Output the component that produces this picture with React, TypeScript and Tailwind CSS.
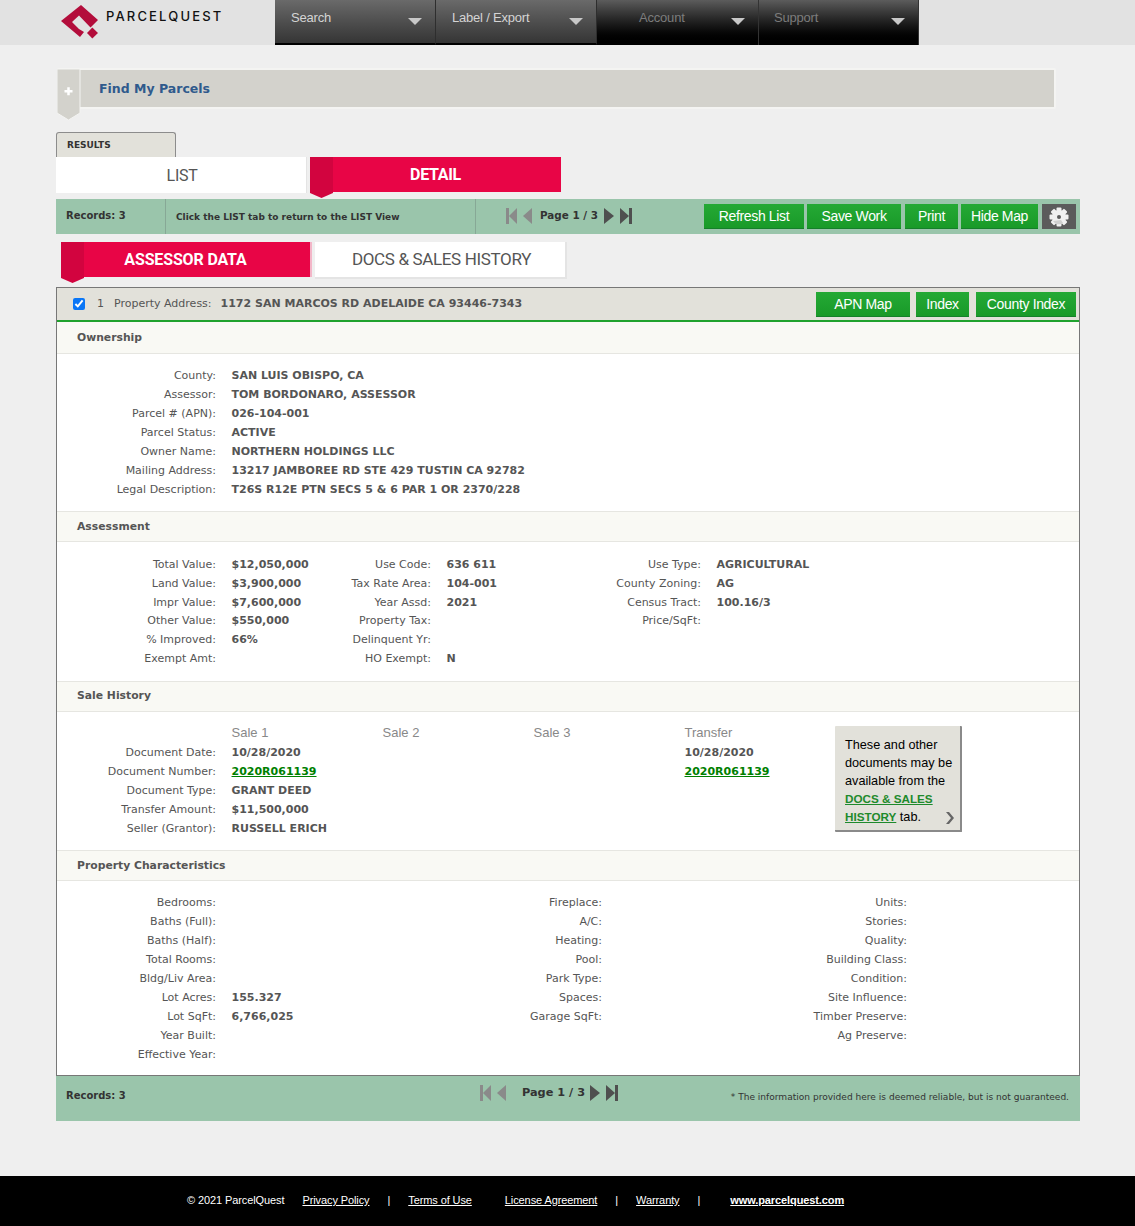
const verdana = "font-['DejaVu_Sans',sans-serif]";

function NavItem({ label, width, dark, indent }: { label: string; width: string; dark?: boolean; indent: string }) {
  return (
    <div
      className={`${width} h-[45px] relative flex items-start pt-[10px] border-r ${indent} ${
        dark
          ? "bg-gradient-to-b from-[#5c5c5c] to-[#000000] border-[#333] text-[#7c7c7c]"
          : "bg-gradient-to-b from-[#6a6a6a] to-[#353535] border-[#2e2e2e] text-[#d4d4d4] border-b-2 border-b-black"
      }`}
    >
      <span className="text-[13px] leading-[15px] tracking-[-0.2px]">{label}</span>
      <svg className="absolute right-[13px] top-[18px]" width="14" height="7" viewBox="0 0 14 7">
        <path d="M0 0h14L7 7z" fill="#c8c8c8" />
      </svg>
    </div>
  );
}

function Pager({ gapLeft, gapRight, size }: { gapLeft: string; gapRight: string; size: string }) {
  return (
    <div className="flex items-center">
      <svg width="27" height="16" viewBox="0 0 27 16">
        <path d="M0 0h3v16H0zM3 8l8-8v16zM26 0v16l-9-8z" fill="#8a8a8a" />
      </svg>
      <span className={`${verdana} ${gapLeft} ${gapRight} ${size} font-bold text-[#333] whitespace-nowrap`}>Page 1 / 3</span>
      <svg width="28" height="16" viewBox="0 0 28 16">
        <path d="M0 0l10 8-10 8zM16 0l9 8-9 8zM25 0h3v16h-3z" fill="#4f4f4f" />
      </svg>
    </div>
  );
}

function GreenButton({ label, width }: { label: string; width: string }) {
  return (
    <button className={`${width} h-[25px] bg-gradient-to-b from-[#24a935] to-[#199a28] border-b border-[#15802a] text-white text-[14px] leading-[25px] tracking-[-0.35px] text-center`}>
      {label}
    </button>
  );
}

function Gear() {
  const teeth = [0, 45, 90, 135];
  return (
    <svg width="20" height="20" viewBox="0 0 20 20">
      {teeth.map((a) => (
        <rect key={a} x="7.500" y="0.500" width="5" height="19" rx="1" fill="#f0f0f0" transform={`rotate(${a} 10 10)`} />
      ))}
      <circle cx="10" cy="10" r="7" fill="#f0f0f0" />
      <circle cx="10" cy="10" r="2" fill="#5b5b5b" />
      <path d="M4 14a7 7 0 0 0 10 2l-2-3z" fill="#cfcfcf" />
    </svg>
  );
}

function SectionHead({ title, first, nudge }: { title: string; first?: boolean; nudge?: boolean }) {
  return (
    <div className={`${first ? "h-[32px] pt-[1px]" : "h-[31px] border-t border-[#e6e6e1]"} ${nudge ? "pt-[2px]" : ""} bg-[#f9f9f4] border-b border-[#e6e6e1] pl-5 flex items-center`}>
      <span className="text-[10.800px] font-bold text-[#555]">{title}</span>
    </div>
  );
}

function Cell({ label, value, h }: { label: string; value?: string; h: string }) {
  return (
    <>
      <div className={`${h} text-right text-[#555] leading-[19px]`}>{label}</div>
      <div className={`${h} pl-[15.500px] font-bold text-[#555] leading-[19px] whitespace-nowrap`}>{value}</div>
    </>
  );
}

const ownership = [
  ["County:", "SAN LUIS OBISPO, CA"],
  ["Assessor:", "TOM BORDONARO, ASSESSOR"],
  ["Parcel # (APN):", "026-104-001"],
  ["Parcel Status:", "ACTIVE"],
  ["Owner Name:", "NORTHERN HOLDINGS LLC"],
  ["Mailing Address:", "13217 JAMBOREE RD STE 429 TUSTIN CA 92782"],
  ["Legal Description:", "T26S R12E PTN SECS 5 & 6 PAR 1 OR 2370/228"],
];

const assessment = [
  ["Total Value:", "$12,050,000", "Use Code:", "636 611", "Use Type:", "AGRICULTURAL"],
  ["Land Value:", "$3,900,000", "Tax Rate Area:", "104-001", "County Zoning:", "AG"],
  ["Impr Value:", "$7,600,000", "Year Assd:", "2021", "Census Tract:", "100.16/3"],
  ["Other Value:", "$550,000", "Property Tax:", "", "Price/SqFt:", ""],
  ["% Improved:", "66%", "Delinquent Yr:", "", "", ""],
  ["Exempt Amt:", "", "HO Exempt:", "N", "", ""],
];

const sales = [
  ["Document Date:", "10/28/2020", "10/28/2020"],
  ["Document Number:", "2020R061139", "2020R061139"],
  ["Document Type:", "GRANT DEED", ""],
  ["Transfer Amount:", "$11,500,000", ""],
  ["Seller (Grantor):", "RUSSELL ERICH", ""],
];

const characteristics = [
  ["Bedrooms:", "", "Fireplace:", "Units:"],
  ["Baths (Full):", "", "A/C:", "Stories:"],
  ["Baths (Half):", "", "Heating:", "Quality:"],
  ["Total Rooms:", "", "Pool:", "Building Class:"],
  ["Bldg/Liv Area:", "", "Park Type:", "Condition:"],
  ["Lot Acres:", "155.327", "Spaces:", "Site Influence:"],
  ["Lot SqFt:", "6,766,025", "Garage SqFt:", "Timber Preserve:"],
  ["Year Built:", "", "", "Ag Preserve:"],
  ["Effective Year:", "", "", ""],
];

export default function App() {
  return (
    <div className="min-h-[1226px] bg-[#efefef] font-['Liberation_Sans',Arial,sans-serif]">
      {/* top nav */}
      <header className="h-[45px] bg-[#e2e2e2] flex">
        <div className="w-[275px] relative flex items-start">
          <svg className="ml-[60px] mt-[4px]" width="40" height="36" viewBox="60 4 40 36">
            <path d="M81 5L98 20L90.500 27.500L79 15.500L72 22L79 29L84 32L80 37L61 21Z" fill="#b30d3b" />
            <path d="M92.300 27.500L98 33L92.300 38.500L87 33Z" fill="#b30d3b" />
          </svg>
          <span className="ml-[6px] mt-[9px] font-['Inter',sans-serif] font-medium text-[13px] leading-[15px] tracking-[2.15px] text-[#111]">PARCELQUEST</span>
        </div>
        <NavItem label="Search" width="w-[161px]" indent="pl-[16px]" />
        <NavItem label="Label / Export" width="w-[161px]" indent="pl-[16px]" />
        <NavItem label="Account" width="w-[162px]" indent="pl-[42px]" dark />
        <NavItem label="Support" width="w-[160px]" indent="pl-[15px]" dark />
      </header>

      <main className="ml-[56px] w-[1024px]">
        {/* find my parcels */}
        <div className="relative mt-[23px] ml-[1px] w-[999px] h-[41px] pt-[1px] bg-[#d3d2cc] border-2 border-[#f4f4f2] rounded-[2px] flex items-center">
          <span className={`${verdana} ml-[40px] text-[12.500px] font-bold text-[#2f5a8c]`}>Find My Parcels</span>
          <svg className="absolute left-[-2px] top-[-1px]" width="24" height="53" viewBox="0 0 24 53">
            <path d="M0 0H23V44L11.500 51L0 44Z" fill="#d3d2cc" stroke="#f4f4f2" strokeWidth="1" />
            <path d="M7.500 21h8v2.500h-8zM10.250 18.250h2.500v8h-2.500z" fill="#fff" />
          </svg>
        </div>

        {/* results tabs */}
        <div className={`${verdana} mt-[23px] w-[120px] h-[25px] bg-[#e2e1da] border border-b-0 border-[#8c8c8c] rounded-t-[3px] pl-[10px] text-[9px] font-bold leading-[24px] text-[#333]`}>
          RESULTS
        </div>
        <div className="flex h-[42px] items-start">
          <div className="w-[251px] h-[36px] pl-[2px] bg-white border-r border-[#e4e4e4] text-center font-['Roboto',sans-serif] text-[16px] leading-[38px] text-[#555] tracking-[-0.3px]">
            LIST
          </div>
          <div className="relative ml-[3px] w-[251px] h-[35px] bg-[#e80546] text-center font-['Roboto',sans-serif] font-bold text-[16px] leading-[35px] text-white tracking-[-0.3px]">
            DETAIL
            <svg className="absolute left-0 top-0" width="23" height="41" viewBox="0 0 23 41">
              <path d="M0 0H23V36L11.500 41L0 36Z" fill="#d2043f" />
            </svg>
          </div>
        </div>

        {/* toolbar */}
        <div className="h-[35px] bg-[#9ac5ab] flex items-center">
          <div className={`${verdana} w-[110px] h-full border-r border-[#87a896] pl-[10px] text-[10px] font-bold leading-[33px] text-[#333]`}>Records: 3</div>
          <div className={`${verdana} w-[310px] h-full border-r border-[#87a896] pl-[10px] text-[9px] font-bold leading-[37px] text-[#333]`}>Click the LIST tab to return to the LIST View</div>
          <div className="ml-[30px] mb-[1px]">
            <Pager gapLeft="ml-[7px]" gapRight="mr-[6px]" size="text-[10.400px]" />
          </div>
          <div className="ml-auto mr-[4px] flex items-center gap-[3px]">
            <GreenButton label="Refresh List" width="w-[100px]" />
            <GreenButton label="Save Work" width="w-[94px] mr-[1px]" />
            <GreenButton label="Print" width="w-[53px]" />
            <GreenButton label="Hide Map" width="w-[77px]" />
            <div className="w-[34px] h-[25px] ml-[1px] bg-[#5b5b5b] flex items-center justify-center">
              <Gear />
            </div>
          </div>
        </div>

        {/* data tabs */}
        <div className="flex mt-[8px] ml-[5px] h-[45px] items-start">
          <div className="relative w-[251px] h-[35px] bg-[#e80546] border-r-2 border-[#f3b6c8] text-center font-['Roboto',sans-serif] font-bold text-[16px] leading-[35px] text-white tracking-[-0.15px]">
            ASSESSOR DATA
            <svg className="absolute left-0 top-0" width="23" height="41" viewBox="0 0 23 41">
              <path d="M0 0H23V36L11.500 41L0 36Z" fill="#d2043f" />
            </svg>
          </div>
          <div className="ml-[3px] w-[252px] h-[37px] pl-[3px] bg-white border-r-2 border-b-2 border-[#e4e4e4] text-center font-['Roboto',sans-serif] text-[17px] leading-[35px] text-[#555] tracking-[-0.35px]">
            DOCS &amp; SALES HISTORY
          </div>
        </div>

        {/* record */}
        <section className={`${verdana} h-[789px] bg-white border border-[#777] text-[11px] text-[#555]`}>
          <div className="h-[34px] bg-[#e2e1da] border-b-2 border-[#1fa22d] flex items-center">
            <input type="checkbox" defaultChecked className="ml-[16px] w-[12px] h-[12px] accent-[#0a76f6]" />
            <span className="ml-[12px]">1</span>
            <span className="ml-[10px]">Property Address:</span>
            <span className="ml-[9px] font-bold">1172 SAN MARCOS RD ADELAIDE CA 93446-7343</span>
            <div className="ml-auto mr-[3px] flex gap-[6px] font-['Liberation_Sans',sans-serif]">
              <GreenButton label="APN Map" width="w-[94px]" />
              <GreenButton label="Index" width="w-[53px]" />
              <GreenButton label="County Index" width="w-[100px] ml-[1px]" />
            </div>
          </div>

          <SectionHead title="Ownership" first />
          <div className="pt-[12px] pb-[12px] grid grid-cols-[159px_1fr]">
            {ownership.map(([l, v]) => (
              <Cell key={l} label={l} value={v} h="h-[19px]" />
            ))}
          </div>

          <SectionHead title="Assessment" nudge />
          <div className="pt-[13px] pb-[13px] grid grid-cols-[159px_100px_115px_169px_101px_1fr]">
            {assessment.map((r) => (
              <div key={r[0]} className="contents">
                <Cell label={r[0]} value={r[1]} h="h-[18.800px]" />
                <Cell label={r[2]} value={r[3]} h="h-[18.800px]" />
                <Cell label={r[4]} value={r[5]} h="h-[18.800px]" />
              </div>
            ))}
          </div>

          <SectionHead title="Sale History" />
          <div className="h-[138px] flex items-start">
            <div className="pt-[12px] w-[778px] grid grid-cols-[159px_151px_151px_151px_1fr]">
              <div className="h-[19px]" />
              {["Sale 1", "Sale 2", "Sale 3", "Transfer"].map((s) => (
                <div key={s} className="h-[19px] pl-[15.500px] font-['Liberation_Sans',sans-serif] text-[13px] leading-[17px] text-[#888]">
                  {s}
                </div>
              ))}
              {sales.map(([l, v, t]) => {
                const isLink = l === "Document Number:";
                const cls = `h-[19px] pl-[15.500px] font-bold leading-[19px] whitespace-nowrap ${isLink ? "text-[#008000] underline" : ""}`;
                return (
                  <div key={l} className="contents">
                    <div className="h-[19px] text-right leading-[19px]">{l}</div>
                    <div className={cls}>{v}</div>
                    <div />
                    <div />
                    <div className={cls}>{t}</div>
                  </div>
                );
              })}
            </div>
            <div className="mt-[14px] w-[127px] h-[106px] bg-[#e2e1da] border-r-2 border-b-2 border-[#8a8a8a] rounded-[1px] relative pl-[10px] pt-[10px] font-['Liberation_Sans',sans-serif] text-[12.700px] leading-[18px] text-black">
              These and other documents may be available from the{" "}
              <span className="font-bold text-[11.700px] text-[#1e8a2c] underline">DOCS &amp; SALES HISTORY</span> tab.
              <svg className="absolute right-[6px] bottom-[6px]" width="9" height="12" viewBox="0 0 9 12">
                <path d="M1 0h3l5 6-5 6H1l5-6z" fill="#666" />
              </svg>
            </div>
          </div>

          <SectionHead title="Property Characteristics" nudge />
          <div className="pt-[12.700px] grid grid-cols-[159px_185px_201px_198px_107px_1fr]">
            {characteristics.map((r) => (
              <div key={r[0]} className="contents">
                <Cell label={r[0]} value={r[1]} h="h-[18.900px]" />
                <Cell label={r[2]} h="h-[18.900px]" />
                <Cell label={r[3]} h="h-[18.900px]" />
              </div>
            ))}
          </div>
        </section>

        {/* bottom bar */}
        <div className="h-[45px] bg-[#9ac5ab] relative flex items-start">
          <div className={`${verdana} w-[424px] pl-[10px] pt-[12px] text-[10px] font-bold text-[#333]`}>Records: 3</div>
          <div className="mt-[9px]">
            <Pager gapLeft="ml-[15px]" gapRight="mr-[5px]" size="text-[11.300px]" />
          </div>
          <div className={`${verdana} ml-auto mr-[11px] mt-[15px] text-[9.050px] text-[#333]`}>* The information provided here is deemed reliable, but is not guaranteed.</div>
        </div>
      </main>

      {/* footer */}
      <footer className="mt-[55px] h-[50px] bg-black text-white text-[11px] leading-[49px] flex tracking-[-0.1px]">
        <span className="ml-[187px]">© 2021 ParcelQuest</span>
        <a className="ml-[18px] underline">Privacy Policy</a>
        <span className="ml-[18px]">|</span>
        <a className="ml-[18px] underline">Terms of Use</a>
        <a className="ml-[33px] underline">License Agreement</a>
        <span className="ml-[18px]">|</span>
        <a className="ml-[18px] underline">Warranty</a>
        <span className="ml-[18px]">|</span>
        <a className="ml-[30px] underline font-bold">www.parcelquest.com</a>
      </footer>
    </div>
  );
}
